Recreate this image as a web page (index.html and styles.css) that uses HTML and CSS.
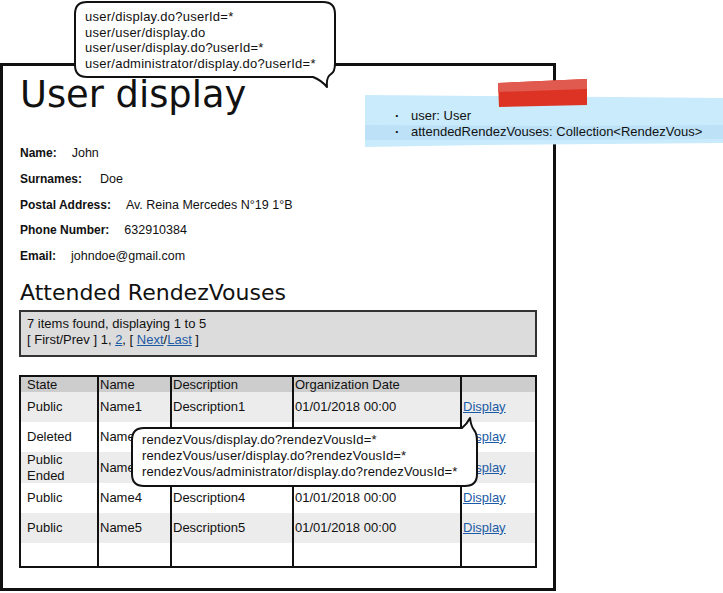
FILE: index.html
```html
<!DOCTYPE html>
<html>
<head>
<meta charset="utf-8">
<title>User display</title>
<link rel="stylesheet" href="styles.css">
</head>
<body>
<div class="stage">
  <div class="frame">
    <h1 class="title">User display</h1>
    <dl class="fields">
      <div class="field"><dt>Name:</dt><dd>John</dd></div>
      <div class="field"><dt>Surnames:</dt><dd class="wide">Doe</dd></div>
      <div class="field"><dt>Postal Address:</dt><dd>Av. Reina Mercedes N°19 1°B</dd></div>
      <div class="field"><dt>Phone Number:</dt><dd>632910384</dd></div>
      <div class="field"><dt>Email:</dt><dd>johndoe@gmail.com</dd></div>
    </dl>
    <h2 class="section">Attended RendezVouses</h2>
    <div class="pager">
      <div>7 items found, displaying 1 to 5</div>
      <div>[ First/Prev ] 1, <a href="#">2</a>, [ <a href="#">Next</a>/<a href="#">Last</a> ]</div>
    </div>
    <div class="grid">
      <div class="trow head">
        <div class="cell">State</div><div class="cell">Name</div><div class="cell">Description</div><div class="cell">Organization Date</div><div class="cell"></div>
      </div>
      <div class="trow shade">
        <div class="cell">Public</div><div class="cell">Name1</div><div class="cell">Description1</div><div class="cell">01/01/2018 00:00</div><div class="cell"><a href="#">Display</a></div>
      </div>
      <div class="trow">
        <div class="cell">Deleted</div><div class="cell">Name2</div><div class="cell">Description2</div><div class="cell">01/01/2018 00:00</div><div class="cell"><a href="#">Display</a></div>
      </div>
      <div class="trow shade tall">
        <div class="cell">Public<br>Ended</div><div class="cell">Name3</div><div class="cell">Description3</div><div class="cell">01/01/2018 00:00</div><div class="cell"><a href="#">Display</a></div>
      </div>
      <div class="trow">
        <div class="cell">Public</div><div class="cell">Name4</div><div class="cell">Description4</div><div class="cell">01/01/2018 00:00</div><div class="cell"><a href="#">Display</a></div>
      </div>
      <div class="trow shade">
        <div class="cell">Public</div><div class="cell">Name5</div><div class="cell">Description5</div><div class="cell">01/01/2018 00:00</div><div class="cell"><a href="#">Display</a></div>
      </div>
      <div class="trow empty">
        <div class="cell"></div><div class="cell"></div><div class="cell"></div><div class="cell"></div><div class="cell"></div>
      </div>
    </div>
  </div>

  <div class="bubble bubble-top">
    <svg class="bubble-shape" width="264" height="90" viewBox="0 0 264 90">
      <path d="M13,1 H249 Q261,1 261,13 V62 Q261,71 257,73 Q252,76 253,86 Q247,79 239,76 H13 Q1,76 1,64 V13 Q1,1 13,1 Z" fill="#fff" stroke="#111" stroke-width="2" stroke-linejoin="round"/>
    </svg>
    <div class="bubble-text">
      <div>user/display.do?userId=*</div>
      <div>user/user/display.do</div>
      <div>user/user/display.do?userId=*</div>
      <div>user/administrator/display.do?userId=*</div>
    </div>
  </div>

  <div class="note">
    <svg class="note-shape" width="360" height="58" viewBox="0 0 360 58">
      <polygon points="2,3 120,4 250,5 360,6 360,51 240,52 120,53 2,55" fill="#c9ebfc"/>
      <polygon points="2,33 180,34 360,33 360,47 180,48 2,48" fill="#bde2f8"/>
    </svg>
    <ul class="note-list">
      <li>user: User</li>
      <li>attendedRendezVouses: Collection&lt;RendezVous&gt;</li>
    </ul>
  </div>

  <div class="tape">
    <svg width="92" height="30" viewBox="0 0 92 30">
      <polygon points="1,5 90,1 90,27 2,29" fill="#dd3324"/>
      <polygon points="1,5 90,1 90,11 1,14" fill="#e05a4f"/>
    </svg>
  </div>

  <div class="bubble bubble-bottom">
    <svg class="bubble-shape" width="350" height="72" viewBox="0 0 350 72">
      <path d="M13,12 H331 Q336,8 339,2 Q340,10 343,14 Q346,17 346,26 V58 Q346,70 334,70 H13 Q1,70 1,58 V24 Q1,12 13,12 Z" fill="#fff" stroke="#111" stroke-width="2" stroke-linejoin="round"/>
    </svg>
    <div class="bubble-text">
      <div>rendezVous/display.do?rendezVousId=*</div>
      <div>rendezVous/user/display.do?rendezVousId=*</div>
      <div>rendezVous/administrator/display.do?rendezVousId=*</div>
    </div>
  </div>
</div>
</body>
</html>
```

FILE: styles.css
```css
* { box-sizing: border-box; }

html, body {
  margin: 0;
  padding: 0;
  background: #fff;
}

body {
  width: 723px;
  height: 593px;
  overflow: hidden;
  font-family: "Liberation Sans", Arial, sans-serif;
  color: #111;
}

.stage {
  position: relative;
  display: flow-root;
  width: 723px;
  height: 593px;
}

a {
  color: #1b5aa5;
  text-decoration: underline;
}

/* main window */
.frame {
  margin-top: 63px;
  width: 556px;
  height: 528px;
  border: 3px solid #111;
  padding: 0 16px 0 16px;
  display: flow-root;
}

.title {
  margin: 10.5px 0 0 0;
  padding-left: 1px;
  font-family: "DejaVu Sans", sans-serif;
  font-weight: normal;
  font-size: 36.8px;
  line-height: 36px;
  color: #111;
}

.fields {
  margin: 28.6px 0 0 0;
  padding-left: 1px;
}

.field {
  display: flex;
  align-items: baseline;
  height: 25.8px;
  line-height: 25.8px;
}

.field dt {
  font-weight: bold;
  font-size: 12px;
  margin-right: 15px;
}

.field dd {
  margin: 0;
  font-size: 12.5px;
}

.field dd.wide {
  margin-left: 3px;
}

.section {
  margin: 12.3px 0 0 0;
  padding-left: 1px;
  font-family: "DejaVu Sans", sans-serif;
  font-weight: normal;
  font-size: 22px;
  line-height: 22px;
}

.pager {
  margin-top: 5.6px;
  height: 47px;
  border: 2px solid #333;
  background: #dcdcdc;
  padding: 3.7px 0 0 6px;
  font-size: 13px;
  line-height: 16px;
}

/* table */
.grid {
  margin-top: 18px;
  width: 518px;
  border: 2px solid #111;
  font-size: 13px;
}

.trow {
  display: grid;
  grid-template-columns: 76px 73px 122px 168px 75px;
  height: 30px;
  background: #fff;
}

.trow.head {
  height: 15px;
  background: #cdcdcd;
}

.trow.shade { background: #ececec; }
.trow.tall { height: 31px; }
.trow.empty { height: 23px; }

.cell {
  display: flex;
  align-items: center;
  padding-left: 1px;
  line-height: 16px;
  border-left: 2px solid #111;
  white-space: nowrap;
}

.cell:first-child {
  border-left: none;
  padding-left: 6px;
}

.head .cell { line-height: 15px; }

/* overlays */
.bubble {
  position: absolute;
}

.bubble-shape {
  position: absolute;
  left: 0;
  top: 0;
}

.bubble-text {
  position: relative;
  font-size: 13px;
  line-height: 15.6px;
}

.bubble-top {
  left: 74px;
  top: 1px;
  width: 264px;
  height: 90px;
}

.bubble-top .bubble-text {
  padding: 8.2px 0 0 11px;
  letter-spacing: 0.25px;
}

.bubble-bottom {
  left: 131px;
  top: 416px;
  width: 350px;
  height: 72px;
}

.bubble-bottom .bubble-text {
  padding: 16px 0 0 11px;
  line-height: 16px;
  letter-spacing: 0.15px;
}

.note {
  position: absolute;
  left: 363px;
  top: 92px;
  width: 360px;
  height: 58px;
}

.note-shape {
  position: absolute;
  left: 0;
  top: 0;
}

.note-list {
  position: relative;
  margin: 0;
  padding: 16px 0 0 48px;
  list-style: none;
  font-size: 13px;
  line-height: 16px;
}

.note-list li {
  position: relative;
}

.note-list li::before {
  content: "\00B7";
  position: absolute;
  left: -16px;
  top: 0;
  font-weight: bold;
}

.tape {
  position: absolute;
  left: 497px;
  top: 78px;
  width: 92px;
  height: 30px;
}

.tape svg { display: block; }
```
